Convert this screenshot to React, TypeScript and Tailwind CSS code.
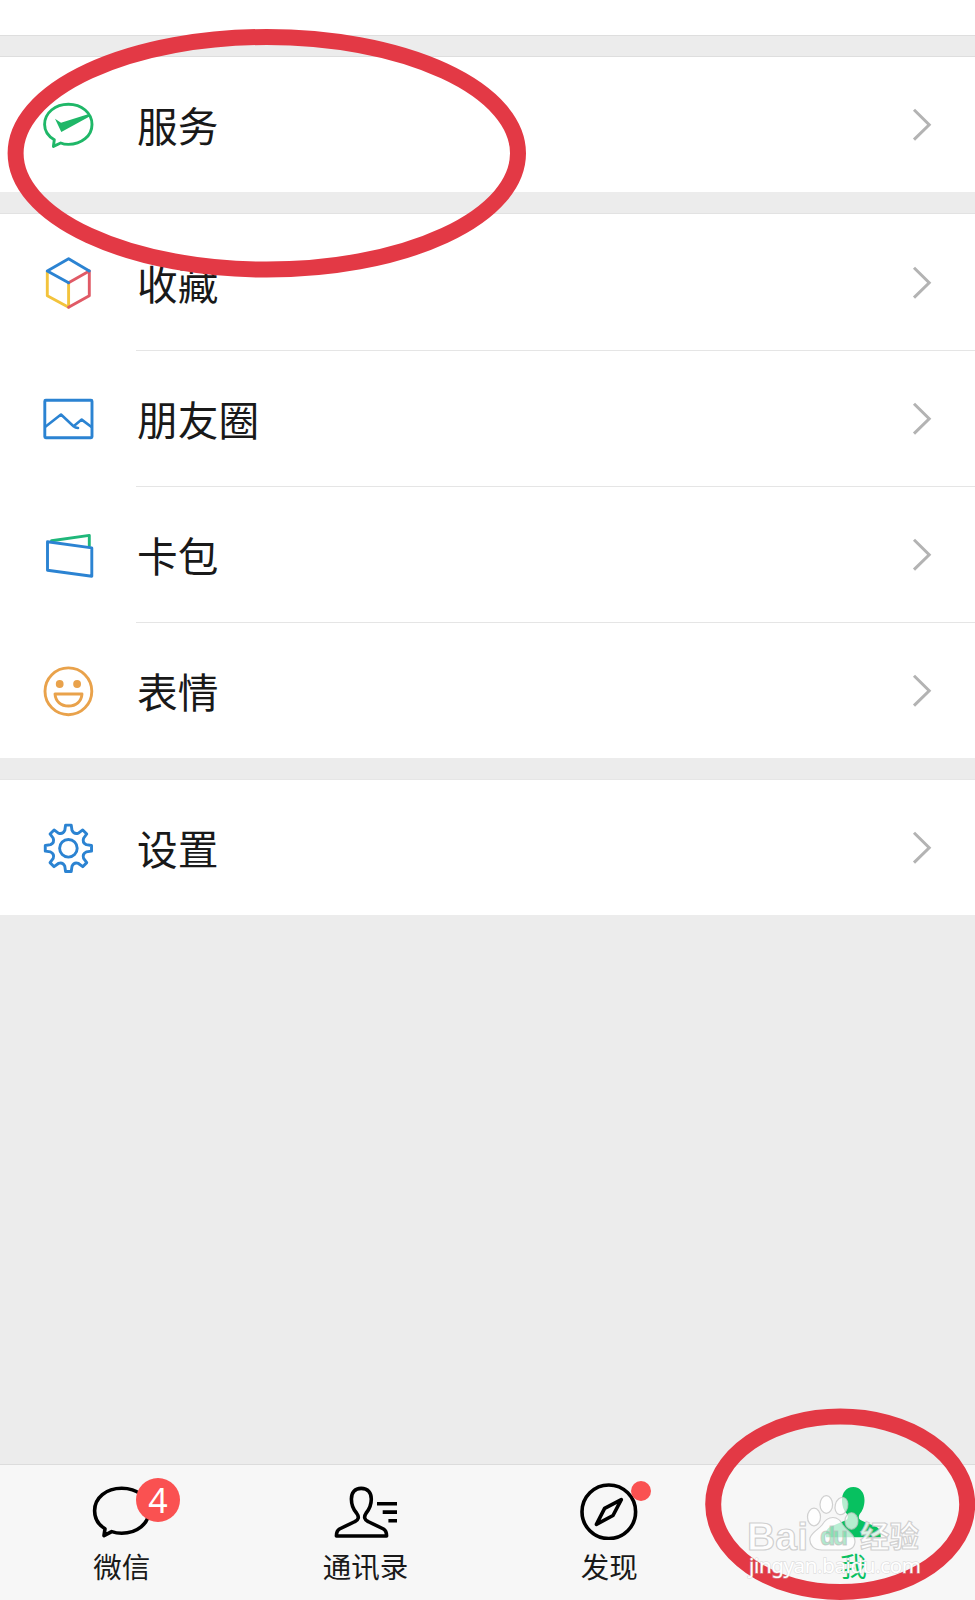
import type { ReactNode } from "react";

const BLUE = "#2b83d2";

// outline of the eight-tooth settings gear
const gearPoint = (angle: number, radius: number) => {
  const rad = (angle * Math.PI) / 180;
  return `${(26.4 + radius * Math.sin(rad)).toFixed(2)} ${(27.3 - radius * Math.cos(rad)).toFixed(2)}`;
};

const gearPath =
  [0, 45, 90, 135, 180, 225, 270, 315]
    .map(
      (a, i) =>
        `${i === 0 ? "M" : "L"}${gearPoint(a - 7, 23.3)} L${gearPoint(a + 7, 23.3)} L${gearPoint(a + 11.5, 18.2)} Q${gearPoint(a + 22.5, 14.8)} ${gearPoint(a + 33.5, 18.2)}`
    )
    .join(" ") + " Z";

const Icon = ({ children }: { children: ReactNode }) => (
  <svg
    className="h-[53px] w-[53px] shrink-0"
    viewBox="0 0 53 53"
    fill="none"
    strokeWidth="2.9"
    strokeLinejoin="round"
    strokeLinecap="round"
  >
    {children}
  </svg>
);

const ServiceIcon = () => (
  <Icon>
    <path
      d="M12.3 41.7 C6 38 2.6 32.8 2.6 26.4 C2.6 14.9 13.2 6.2 26.4 6.2 S50 14.9 50 26.4 S39.5 46.4 26.4 46.4 C23.6 46.4 21 46 18.7 45 L11.4 48.4 Z"
      stroke="#1fb768"
    />
    <path d="M13 20.8 L19 24.8 L46 16.3 L48 18.2 L19.3 33.9 Z" fill="#1fb768" />
  </Icon>
);

const FavoritesIcon = () => (
  <Icon>
    <path d="M5.3 15.5 V39.7 L26.6 51.3 V27" stroke="#f3c33c" />
    <path d="M26.6 51.3 L47.3 39.7 V15 L26.6 26.7" stroke="#e05a66" />
    <path d="M5.3 15 L26.6 2.8 L47.3 15 M5.3 15 L26.6 26.7" stroke={BLUE} />
  </Icon>
);

const MomentsIcon = () => (
  <Icon>
    <rect x="2.8" y="8.2" width="47.2" height="37.6" rx="1" stroke={BLUE} />
    <path d="M3.7 34.5 L19 22.5 L31.5 34.2 Q33.5 36 36 36 M32.5 33.4 L39.7 27.6 L49.5 35" stroke={BLUE} strokeWidth="2.6" />
  </Icon>
);

const CardsIcon = () => (
  <Icon>
    <path d="M9.5 12.8 L47.3 7.4 V18" stroke="#1fb77a" />
    <path d="M5.5 13.8 L49.8 19.9 V48.2 L5.5 42.2 Z" stroke={BLUE} />
  </Icon>
);

const StickerIcon = () => (
  <Icon>
    <circle cx="26.4" cy="27.3" r="23.4" stroke="#e9a24b" />
    <circle cx="17.7" cy="20" r="3.9" fill="#e9a24b" />
    <circle cx="35.1" cy="20" r="3.9" fill="#e9a24b" />
    <path d="M13 30 H40 C39.5 37.5 34 42 26.5 42 S13.5 37.5 13 30 Z" stroke="#e9a24b" />
  </Icon>
);

const SettingsIcon = () => (
  <Icon>
    <path d={gearPath} stroke={BLUE} />
    <circle cx="26.4" cy="27.3" r="8.8" stroke={BLUE} />
  </Icon>
);

const Row = ({ icon, label, divider }: { icon: ReactNode; label: string; divider?: boolean }) => (
  <div className="flex h-[135px] items-center bg-white pl-[42px]">
    {icon}
    <div className={`ml-[41px] flex flex-1 items-center justify-between pr-[43px] ${divider ? "h-[137px] border-t border-[#e5e5e5] pb-px" : "h-[135px]"}`}>
      <span className="pt-0.5 pl-px text-[40.7px] leading-none text-[#191919]">{label}</span>
      <svg className="h-[33px] w-5" viewBox="0 0 20 33" fill="none" stroke="#b3b3b3" strokeWidth="3">
        <path d="M2 1.8 L17.2 16.7 L2 31.6" />
      </svg>
    </div>
  </div>
);

const Tab = ({ label, active, badge, children }: { label: string; active?: boolean; badge?: ReactNode; children: ReactNode }) => (
  <div className="flex flex-1 flex-col items-center pt-[15px]">
    <div className="relative">
      <svg
        className="h-[60px] w-[68px]"
        viewBox="0 0 68 60"
        fill="none"
        stroke="#000"
        strokeWidth="3.6"
        strokeLinejoin="round"
      >
        {children}
      </svg>
      {badge}
    </div>
    <span className={`mt-3 leading-[28px] ${active ? "text-[27px] text-[#07c160]" : "text-[28.5px] text-[#191919]"}`}>{label}</span>
  </div>
);

const Watermark = () => (
  <g fill="#fff" fillOpacity="0.85" stroke="#bdbdbd" strokeOpacity="0.7" strokeWidth="1.2" fontWeight="bold">
    <text x="747" y="1549.5" fontSize="39" textLength="61" fontFamily="Liberation Sans, sans-serif">Bai</text>
    <ellipse cx="814" cy="1517" rx="6.5" ry="8.8" />
    <ellipse cx="826.3" cy="1504.5" rx="6.3" ry="8.8" />
    <ellipse cx="841.5" cy="1506" rx="6.3" ry="8.8" fillOpacity="0.7" transform="rotate(15 841.5 1506)" />
    <ellipse cx="851.5" cy="1521" rx="6.5" ry="8.3" fillOpacity="0.7" />
    <path
      d="M822 1525 C828 1515 838 1515 843 1525 C848 1532 855 1534 855 1542 C854 1551 846 1550 841 1550 H822 C814 1550 809 1545 810 1538 C812 1532 818 1530 822 1525 Z"
      fillOpacity="0.72"
    />
    <text x="820" y="1545" fontSize="25" textLength="28" fill="#35c97d" fillOpacity="0.4" strokeWidth="1" fontFamily="Liberation Sans, sans-serif">du</text>
    <text x="860" y="1547" fontSize="29.5" textLength="59" fontFamily="Noto Sans CJK SC, sans-serif">经验</text>
    <text x="749" y="1572.5" fontSize="20.5" textLength="172" fontWeight="normal" stroke="#c8c8c8" strokeOpacity="0.5" strokeWidth="1.4" paintOrder="stroke" fillOpacity="1" fontFamily="Noto Sans, sans-serif">
      jingyan.baidu.com
    </text>
  </g>
);

const App = () => {
  return (
    <div className="relative flex h-[1600px] w-[975px] flex-col overflow-hidden bg-[#ececec] font-['Noto_Sans_CJK_SC',sans-serif]">
      <div className="h-[35px] bg-white" />
      <div className="h-[22px] border-y border-[#dedede]" />
      <Row icon={<ServiceIcon />} label="服务" />
      <div className="h-[22px] border-b border-[#e2e2e2]" />
      <div className="flex flex-col gap-px bg-white pt-px">
        <Row icon={<FavoritesIcon />} label="收藏" />
        <Row icon={<MomentsIcon />} label="朋友圈" divider />
        <Row icon={<CardsIcon />} label="卡包" divider />
        <Row icon={<StickerIcon />} label="表情" divider />
      </div>
      <div className="h-[22px] border-b border-[#e6e6e6]" />
      <Row icon={<SettingsIcon />} label="设置" />

      <nav className="mt-auto flex h-[136px] border-t border-[#dcdcdc] bg-[#f7f7f7]">
        <Tab
          label="微信"
          badge={
            <span className="absolute -top-[2px] left-12 flex h-11 w-11 items-center justify-center rounded-full bg-[#fa5151] font-['Noto_Sans',sans-serif] text-[34px] leading-none text-white">
              4
            </span>
          }
        >
          <path d="M17 48.8 C10 44.5 6.6 38 6.6 30.7 C6.6 17.7 18.2 8.2 33.7 8.2 S61 17.7 61 30.7 S49 53.2 33.7 53.2 C30 53.2 27 52.7 23.7 51.6 L16 55.6 Z" />
        </Tab>
        <Tab label="通讯录">
          <path d="M29.2 8.4 C22.5 8.4 19.4 13 19.4 19 C19.4 26 21 29 24.5 33 C27.5 37 26.5 40 23 41.5 L7.5 49 C5 50.5 4.4 52 4.4 56 H54.6 C54.6 52 54 50.5 51.5 49 L36 41.5 C32.5 40 31.5 37 34.2 33 C37.5 29 39.3 26 39.3 19 C39.3 13 36 8.4 29.2 8.4 Z" />
          <path d="M45 23.7 H65 M50.7 32.1 H65 M56.4 40.7 H65" />
        </Tab>
        <Tab
          label="发现"
          badge={<span className="absolute top-px left-14 h-5 w-5 rounded-full bg-[#fa5151]" />}
        >
          <circle cx="33.8" cy="31.8" r="26.8" />
          <path d="M46.3 19.7 L38 35.5 L21.4 44.3 L29.6 28.4 Z" />
        </Tab>
        <Tab label="我" active>
          <path
            d="M34.3 7 C27 7 23 13 23 20 C23 26 25 31 28 34 C30 38 28 40 25 41 L12 46.5 C7.5 48.5 7 51 7 57.3 H61.7 C61.7 51 61 48.5 56.5 46.5 L43.5 41 C40.5 40 38.5 38 40.7 34 C43.5 31 45.5 26 45.5 20 C45.5 13 41.5 7 34.3 7 Z"
            fill="#07c160"
            stroke="none"
          />
        </Tab>
      </nav>

      {/* hand-drawn highlights and the site mark float over the page */}
      <svg className="pointer-events-none absolute inset-0 h-[1600px] w-[975px]" viewBox="0 0 975 1600" fill="none">
        <ellipse cx="266.8" cy="153.3" rx="251.2" ry="116.3" stroke="#e33945" strokeWidth="16" />
        <ellipse cx="840.2" cy="1504.3" rx="127" ry="87.7" stroke="#e33945" strokeWidth="16" />
        <Watermark />
      </svg>
    </div>
  );
};

export default App;
